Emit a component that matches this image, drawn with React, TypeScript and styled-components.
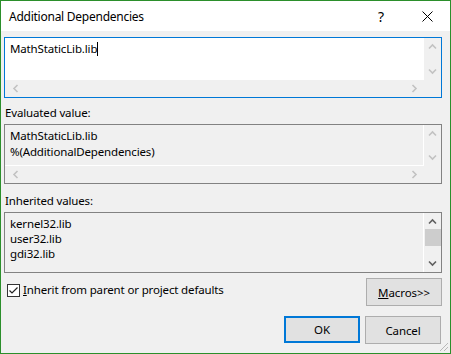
import React from "react";
import styled, { createGlobalStyle } from "styled-components";

const Global = createGlobalStyle`
  html, body { margin: 0; padding: 0; background: #f0f0f0; }
  body { font-family: "Noto Sans", "Open Sans", sans-serif; font-size: 11.5px; color: #000; }
  * { box-sizing: border-box; }
`;

const Window = styled.div`
  width: 451px;
  height: 354px;
  border: 1px solid #2b8f2b;
  background: #f0f0f0;
  display: flex;
  flex-direction: column;
  position: relative;
`;

const TitleBar = styled.div`
  height: 30px;
  background: #fff;
  display: flex;
  align-items: center;
  padding-left: 8px;
`;

const Title = styled.div`
  flex: 1;
  font-size: 12px;
  letter-spacing: -0.25px;
`;

const TitleButton = styled.div<{ $w: number }>`
  width: ${(p) => p.$w}px;
  height: 30px;
  display: flex;
  align-items: center;
  justify-content: center;
  font-size: 14px;
`;

const Body = styled.div`
  flex: 1;
  display: flex;
  flex-direction: column;
  padding: 6px 8px 0 3px;
`;

const Box = styled.div<{ $h: number; $focus?: boolean; $disabled?: boolean }>`
  height: ${(p) => p.$h}px;
  border: 1px solid ${(p) => (p.$focus ? "#0078d7" : "#828282")};
  background: ${(p) => (p.$disabled ? "#f0f0f0" : "#fff")};
  display: grid;
  grid-template-columns: 1fr 17px;
  grid-template-rows: 1fr auto;
`;

const Content = styled.div<{ $disabled?: boolean; $top: number; $span?: boolean }>`
  background: ${(p) => (p.$disabled ? "#f0f0f0" : "#fff")};
  padding: ${(p) => p.$top}px 5px 0 5px;
  line-height: 15px;
  letter-spacing: -0.15px;
  border-right: 1px solid #fff;
  border-bottom: ${(p) => (p.$disabled && !p.$span ? "1px solid #fff" : "none")};
  grid-row: ${(p) => (p.$span ? "span 2" : "auto")};
`;

const Line = styled.div<{ $h?: number }>`
  height: ${(p) => p.$h ?? 15}px;
  white-space: nowrap;
`;

const Caret = styled.span`
  display: inline-block;
  width: 1px;
  height: 14px;
  background: #000;
  vertical-align: -3px;
`;

const VScroll = styled.div<{ $span?: boolean }>`
  background: #f0f0f0;
  display: flex;
  flex-direction: column;
  align-items: center;
  justify-content: space-between;
  padding: 4px 0;
  grid-row: ${(p) => (p.$span ? "span 2" : "auto")};
`;

const Thumb = styled.div`
  width: 16px;
  height: 17px;
  background: #cdcdcd;
`;

const VStack = styled.div`
  display: flex;
  flex-direction: column;
  align-items: center;
  gap: 3px;
`;

const HScroll = styled.div`
  height: 17px;
  background: #f0f0f0;
  display: flex;
  align-items: center;
  justify-content: space-between;
  padding: 0 5px 0 6px;
`;

const Corner = styled.div`
  background: #f0f0f0;
`;

const Label = styled.div<{ $h: number }>`
  height: ${(p) => p.$h}px;
  display: flex;
  align-items: flex-end;
  padding: 0 0 3px 1px;
  line-height: 16px;
  letter-spacing: -0.15px;
`;

const Row = styled.div`
  display: flex;
  justify-content: space-between;
  align-items: flex-start;
  margin-top: 5px;
  padding-left: 3px;
`;

const Check = styled.label`
  display: flex;
  align-items: center;
  gap: 3px;
  margin-top: 4px;
  letter-spacing: -0.15px;
  line-height: 16px;
`;

const CheckBox = styled.span`
  width: 13px;
  height: 13px;
  border: 1px solid #333;
  background: #fff;
  display: flex;
  align-items: center;
  justify-content: center;
`;

const Button = styled.div<{ $default?: boolean }>`
  width: 76px;
  height: ${(p) => (p.$default ? 27 : 28)}px;
  background: #e1e1e1;
  border: ${(p) => (p.$default ? "2px solid #0078d7" : "1px solid #adadad")};
  display: flex;
  align-items: center;
  justify-content: center;
  letter-spacing: -0.1px;
`;

const Buttons = styled.div`
  display: flex;
  justify-content: flex-end;
  gap: 5px;
  margin-top: 10px;
  margin-right: 1px;
`;

const Grip = styled.div`
  position: absolute;
  right: 1px;
  bottom: 1px;
  width: 12px;
  height: 12px;
`;

const Chevron = ({ dir, color }: { dir: "up" | "down" | "left" | "right"; color: string }) => {
  const rot = { up: 0, down: 180, left: 270, right: 90 }[dir];
  return (
    <svg width="9" height="9" viewBox="0 0 9 9" style={{ transform: `rotate(${rot}deg)` }}>
      <path d="M1 6.5 L4.5 3 L8 6.5" stroke={color} strokeWidth="1.6" fill="none" />
    </svg>
  );
};

const U = styled.span`
  text-decoration: underline;
`;

export default function App() {
  const dis = "#c2c2c2";
  const en = "#606060";
  return (
    <>
      <Global />
      <Window>
        <TitleBar>
          <Title>Additional Dependencies</Title>
          <TitleButton $w={46}>?</TitleButton>
          <TitleButton $w={46}>
            <svg width="11" height="11" viewBox="0 0 11 11">
              <path d="M0.5 0.5 L10.5 10.5 M10.5 0.5 L0.5 10.5" stroke="#000" strokeWidth="1" />
            </svg>
          </TitleButton>
        </TitleBar>
        <Body>
          <Box $h={61} $focus>
            <Content $top={3}>
              <Line $h={16}>
                MathStaticLib.lib<Caret />
              </Line>
            </Content>
            <VScroll>
              <Chevron dir="up" color={dis} />
              <Chevron dir="down" color={dis} />
            </VScroll>
            <HScroll>
              <Chevron dir="left" color={dis} />
              <Chevron dir="right" color={dis} />
            </HScroll>
            <Corner />
          </Box>
          <Label $h={26}>Evaluated value:</Label>
          <Box $h={60} $disabled>
            <Content $disabled $top={3}>
              <Line $h={16}>MathStaticLib.lib</Line>
              <Line $h={16}>%(AdditionalDependencies)</Line>
            </Content>
            <VScroll>
              <Chevron dir="up" color={dis} />
              <Chevron dir="down" color={dis} />
            </VScroll>
            <HScroll>
              <Chevron dir="left" color={dis} />
              <Chevron dir="right" color={dis} />
            </HScroll>
            <Corner />
          </Box>
          <Label $h={28}>Inherited values:</Label>
          <Box $h={61} $disabled>
            <Content $disabled $span $top={3}>
              <Line>kernel32.lib</Line>
              <Line>user32.lib</Line>
              <Line>gdi32.lib</Line>
            </Content>
            <VScroll $span>
              <VStack>
                <Chevron dir="up" color={en} />
                <Thumb />
              </VStack>
              <Chevron dir="down" color={en} />
            </VScroll>
          </Box>
          <Row>
            <Check>
              <CheckBox>
                <svg width="11" height="11" viewBox="0 0 11 11">
                  <path d="M1.5 5.5 L4 8 L9.5 2.5" stroke="#222" strokeWidth="1.2" fill="none" />
                </svg>
              </CheckBox>
              <span>
                <U>I</U>nherit from parent or project defaults
              </span>
            </Check>
            <Button>
              <span>
                <U>M</U>acros&gt;&gt;
              </span>
            </Button>
          </Row>
          <Buttons>
            <Button $default>OK</Button>
            <Button>Cancel</Button>
          </Buttons>
        </Body>
        <Grip>
          <svg width="12" height="12" viewBox="0 0 12 12">
            <path d="M11 3 L3 11 M11 7 L7 11" stroke="#b8b8b8" strokeWidth="1" />
          </svg>
        </Grip>
      </Window>
    </>
  );
}
